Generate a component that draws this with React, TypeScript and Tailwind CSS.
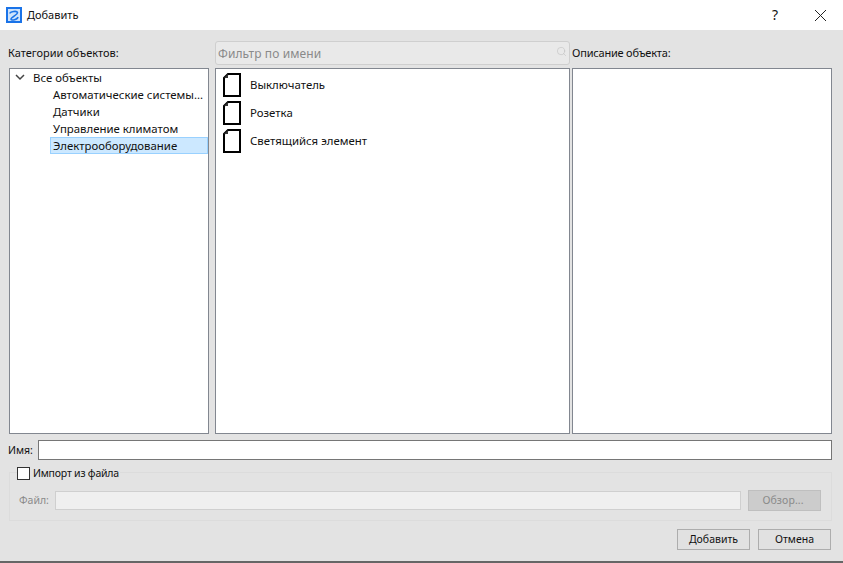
import { Search } from "lucide-react";

const objects = ["Выключатель", "Розетка", "Светящийся элемент"];

function FileIcon() {
  return (
    <svg width="18" height="24" viewBox="0 0 18 24" className="shrink-0">
      <path d="M5 1H17V23H1V5Z" fill="#fff" stroke="#000" strokeWidth="2" />
      <path d="M1 5L5 1V5Z" fill="#333" />
    </svg>
  );
}

export default function App() {
  return (
    <div
      className="w-[843px] h-[563px] flex flex-col bg-[#e3e3e3] text-[11px] text-[#111] overflow-hidden border-b-2 border-[#666]"
      style={{ fontFamily: '"Noto Sans", "Open Sans", sans-serif' }}
    >
      <div className="h-[30px] shrink-0 bg-white flex items-center pl-[6px]">
        <svg width="16" height="16" viewBox="0 0 16 16" className="shrink-0">
          <rect width="16" height="16" fill="#1a73e8" />
          <rect x="2" y="2" width="12" height="12" fill="#cfe3fb" />
          <path d="M4 6.500C4 4.500 11 3.500 11.500 5.500S4.500 10.500 5 12.200 11.500 12.500 12 10" fill="none" stroke="#1a73e8" strokeWidth="1.600" />
        </svg>
        <span className="ml-[5px] -mt-[1px] leading-none">Добавить</span>
        <span className="ml-auto w-[14px] text-center text-[14px] leading-none">?</span>
        <svg width="11" height="11" viewBox="0 0 11 11" className="ml-[33px] mr-[17px] shrink-0">
          <path d="M0 0L11 11M11 0L0 11" stroke="#222" strokeWidth="1" />
        </svg>
      </div>

      <div className="flex-1 flex flex-col px-[9px] pt-[11px] pr-[11px]">
        <div className="flex h-[24px] shrink-0">
          <div className="w-[206px] flex items-center pt-[1px] -ml-[1px] mr-[1px]">Категории объектов:</div>
          <div className="w-[355px] h-[24px] flex items-center justify-between rounded-[3px] border border-[#cfcfcf] bg-[#e9e9e9] pl-[2px] pr-[2px] text-[#8a8a8a]">
            <span className="text-[12px] tracking-[0.1px] mt-[1px]">Фильтр по имени</span>
            <Search size={11} strokeWidth={1} className="text-[#b5b5b5] -mt-[3px]" />
          </div>
          <div className="flex items-center pl-[2px] pt-[1px] tracking-[-0.2px]">Описание объекта:</div>
        </div>

        <div className="flex h-[366px] mt-[3px] shrink-0 text-[11.4px]">
          <div className="w-[200px] bg-white border border-[#828790] pl-[1px]">
            <div className="h-[17px] flex items-center">
              <svg width="10" height="7" viewBox="0 0 10 7" className="ml-[4px] shrink-0">
                <path d="M1 1L5 5L9 1" fill="none" stroke="#444" strokeWidth="1.500" />
              </svg>
              <span className="ml-[8px]">Все объекты</span>
            </div>
            <div className="h-[17px] flex items-center pl-[42px] whitespace-nowrap">Автоматические системы...</div>
            <div className="h-[17px] flex items-center pl-[42px]">Датчики</div>
            <div className="h-[17px] flex items-center pl-[42px]">Управление климатом</div>
            <div className="h-[17px] flex items-center ml-[39px] pl-[2px] bg-[#cce8ff] border border-[#99d1ff]">Электрооборудование</div>
          </div>

          <div className="w-[355px] ml-[6px] bg-white border border-[#828790] pt-[2px] pl-[7px]">
            {objects.map((name) => (
              <div key={name} className="h-[28px] flex items-center gap-[9px]">
                <FileIcon />
                <span>{name}</span>
              </div>
            ))}
          </div>

          <div className="w-[260px] ml-[2px] bg-white border border-[#828790]" />
        </div>

        <div className="flex items-center h-[20px] mt-[6px] shrink-0 text-[10.5px]">
          <span className="w-[29px] -ml-[1px] mr-[1px] pt-[2px]">Имя:</span>
          <div className="flex-1 h-[20px] bg-white border border-[#767676]" />
        </div>

        <div className="relative h-[49px] mt-[12px] shrink-0 border border-[#dcdcdc] flex items-center pl-[9px] pr-[10px] pt-[8px] text-[10.5px]">
          <div className="absolute left-[7px] -top-[7px] flex items-center bg-[#e3e3e3] pr-[1px]">
            <div className="w-[13px] h-[13px] bg-white border border-[#333]" />
            <span className="ml-[3px] tracking-[-0.2px]">Импорт из файла</span>
          </div>
          <span className="w-[36px] text-[#8a8a8a]">Файл:</span>
          <div className="w-[686px] h-[19px] mb-[1px] bg-[#efefef] border border-[#cfcfcf]" />
          <div className="ml-[7px] w-[73px] h-[21px] flex items-center justify-center bg-[#cccccc] border border-[#bfbfbf] text-[#8a8a8a] pr-[3px] tracking-[0.1px]">Обзор...</div>
        </div>

        <div className="flex justify-end gap-[8px] mt-[8px] pr-[1px] shrink-0 text-[10.5px]">
          <div className="w-[73px] h-[21px] flex items-center justify-center bg-[#e1e1e1] border border-[#adadad]">Добавить</div>
          <div className="w-[73px] h-[21px] flex items-center justify-center bg-[#e1e1e1] border border-[#adadad]">Отмена</div>
        </div>
      </div>
    </div>
  );
}
